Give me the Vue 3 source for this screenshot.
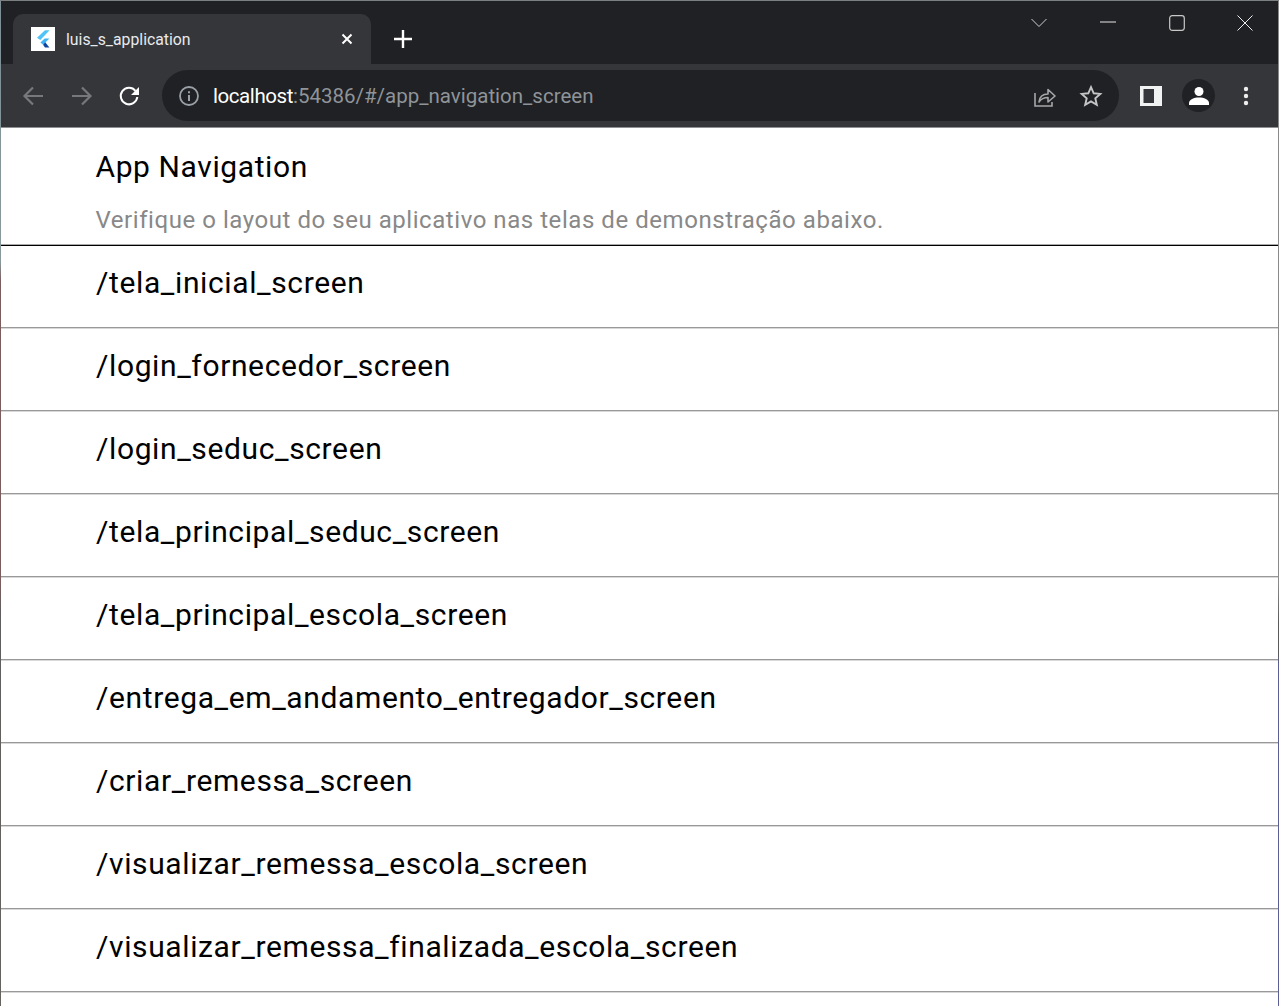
<script setup>
const routes = [
  '/tela_inicial_screen',
  '/login_fornecedor_screen',
  '/login_seduc_screen',
  '/tela_principal_seduc_screen',
  '/tela_principal_escola_screen',
  '/entrega_em_andamento_entregador_screen',
  '/criar_remessa_screen',
  '/visualizar_remessa_escola_screen',
  '/visualizar_remessa_finalizada_escola_screen',
]
</script>

<template>
  <div class="window">
    <div class="strip">
      <div class="tab">
        <span class="favicon">
          <svg width="24" height="24" viewBox="0 0 24 24">
            <path d="M14 3.200h4.600L9.300 13 6 10.800z" fill="#4fc3f7" />
            <path d="M18.400 11.600h-4.700l-4.300 4 2.700 2.200z" fill="#40b4f3" />
            <path d="M12.100 17.800l1.900 2.800h4.400l-4.200-5.400z" fill="#0d47a1" />
          </svg>
        </span>
        <span class="tab-title">luis_s_application</span>
        <svg class="tab-close" width="12" height="12" viewBox="0 0 12 12">
          <path d="M1.500 1.500l9 9M10.500 1.500l-9 9" stroke="#fff" stroke-width="2" />
        </svg>
      </div>
      <svg class="new-tab" width="18" height="18" viewBox="0 0 18 18">
        <path d="M9 0v18M0 9h18" stroke="#fff" stroke-width="2.400" />
      </svg>
      <div class="win-controls">
        <svg class="ctl" width="16" height="10" viewBox="0 0 16 10">
          <path d="M.5 1l7.500 7.500L15.500 1" fill="none" stroke="#cfd0d1" stroke-width="1" />
        </svg>
        <svg class="ctl" width="16" height="2" viewBox="0 0 16 2">
          <path d="M0 1h16" stroke="#e8e8e8" stroke-width="1" />
        </svg>
        <svg class="ctl" width="16" height="16" viewBox="0 0 16 16">
          <rect x=".7" y=".7" width="14.600" height="14.600" rx="2.500" fill="none" stroke="#c8c8c8" stroke-width="1.200" />
        </svg>
        <svg class="ctl" width="16" height="16" viewBox="0 0 16 16">
          <path d="M.5.5l15 15M15.500.5l-15 15" stroke="#eee" stroke-width="1" />
        </svg>
      </div>
    </div>

    <div class="toolbar">
      <svg class="nav" width="24" height="24" viewBox="0 0 24 24">
        <path d="M22 12H4.500M12 3.500 3.500 12l8.500 8.500" fill="none" stroke="#77787b" stroke-width="2.200" />
      </svg>
      <svg class="nav" width="24" height="24" viewBox="0 0 24 24">
        <path d="M3 12h17.500M13 3.500 21.500 12 13 20.500" fill="none" stroke="#77787b" stroke-width="2.200" />
      </svg>
      <svg class="nav" width="24" height="24" viewBox="0 0 24 24">
        <path d="M18.500 6.800A8.300 8.300 0 1 0 20.300 13" fill="none" stroke="#fff" stroke-width="2" />
        <path d="M22 3v8h-8z" fill="#fff" />
      </svg>
      <div class="omnibox">
        <svg class="info" width="20" height="20" viewBox="0 0 20 20">
          <circle cx="10" cy="10" r="9" fill="none" stroke="#9aa0a6" stroke-width="1.800" />
          <path d="M10 9v6M10 5.200v2" stroke="#9aa0a6" stroke-width="2" />
        </svg>
        <span class="url"><span class="host">localhost</span>:54386/#/app_navigation_screen</span>
        <span class="spacer"></span>
        <svg class="share" width="24" height="24" viewBox="0 0 24 24">
          <path d="M3 9v13h17v-4" fill="none" stroke="#a6a7a9" stroke-width="1.600" />
          <path d="M7 18c.5-5 4-8 9-8V5.500l7 6.500-7 6v-4.500c-4 0-7 1.500-9 4.500z" fill="none" stroke="#a6a7a9" stroke-width="1.600" stroke-linejoin="round" />
        </svg>
        <svg class="star" width="24" height="24" viewBox="0 0 24 24">
          <path d="M12 3.200l2.700 6.100 6.600.6-5 4.400 1.500 6.500L12 17.400l-5.800 3.400 1.500-6.500-5-4.400 6.600-.6z" fill="none" stroke="#c4c5c6" stroke-width="1.900" />
        </svg>
      </div>
      <svg class="panel" width="22" height="20" viewBox="0 0 22 20">
        <rect width="22" height="20" fill="#f1f2f2" />
        <rect x="3.500" y="3" width="10.500" height="14" fill="#35363a" />
      </svg>
      <span class="avatar">
        <svg width="20" height="20" viewBox="0 0 20 20">
          <circle cx="10" cy="5.500" r="4.500" fill="#fff" />
          <path d="M0 19v-2c0-3.500 5-5.500 10-5.500s10 2 10 5.500v2z" fill="#fff" />
        </svg>
      </span>
      <svg class="menu" width="6" height="20" viewBox="0 0 6 20">
        <circle cx="3" cy="3" r="2.200" fill="#eee" />
        <circle cx="3" cy="10" r="2.200" fill="#eee" />
        <circle cx="3" cy="17" r="2.200" fill="#eee" />
      </svg>
    </div>

    <main class="page">
      <header class="head">
        <h1>App Navigation</h1>
        <p>Verifique o layout do seu aplicativo nas telas de demonstração abaixo.</p>
      </header>
      <div v-for="r in routes" :key="r" class="row">{{ r }}</div>
    </main>
  </div>
</template>

<style>
html, body { margin: 0; background: #fff; }
</style>

<style scoped>
.window {
  height: 1006px;
  box-sizing: border-box;
  overflow: hidden;
  display: flex;
  flex-direction: column;
  padding: 1px 1px 0;
  background:
    linear-gradient(#7b7f80, #7b7f80) top / 100% 1px no-repeat,
    linear-gradient(#7e9096 0, #8a9a9c 26%, #7a5c5c 28%, #7a5c5c 58%, #5e5e5e 61%, #66625e 100%) left / 1px 100% no-repeat,
    linear-gradient(#8a8a8a 0, #8a8a8a 58%, #5a5a5a 62%, #5a5a5a 65%, #5c5f96 66%, #5c5f96 100%) right / 1px 100% no-repeat,
    #fff;
  font-family: Roboto, "Liberation Sans", sans-serif;
}
.strip {
  height: 63px;
  flex: none;
  background: #202124;
  display: flex;
  align-items: flex-end;
  padding-left: 12px;
}
.tab {
  position: relative;
  width: 358px;
  height: 50px;
  background: #35363a;
  border-radius: 10px 10px 0 0;
  display: flex;
  align-items: center;
  padding: 0 18px 0 18px;
  box-sizing: border-box;
}
.favicon {
  width: 24px;
  height: 24px;
  background: #fff;
  display: block;
  flex: none;
}
.favicon svg { display: block; }
.tab-title {
  margin-left: 11px;
  color: #e8eaed;
  font-size: 15.8px;
  flex: 1;
}
.new-tab { margin: 0 0 16px 23px; }
.win-controls {
  margin-left: auto;
  align-self: stretch;
  display: flex;
  align-items: flex-start;
}
.ctl { position: absolute; }
.ctl:nth-child(1) { top: 18px; right: 232px; }
.ctl:nth-child(2) { top: 21px; right: 163px; }
.ctl:nth-child(3) { top: 15px; right: 94px; }
.ctl:nth-child(4) { top: 15px; right: 26px; }
.toolbar {
  height: 64px;
  flex: none;
  background: #35363a;
  border-bottom: 1px solid #8f9092;
  display: flex;
  align-items: center;
  padding-left: 20px;
  box-sizing: border-box;
}
.nav { margin-right: 24px; flex: none; }
.nav:nth-child(3) { margin-right: 21px; }
.omnibox {
  width: 957px;
  height: 51px;
  flex: none;
  background: #202124;
  border-radius: 26px;
  display: flex;
  align-items: center;
  padding-left: 17px;
  padding-right: 16px;
  box-sizing: border-box;
}
.url {
  margin-left: 14px;
  color: #8f9499;
  font-size: 20.5px;
}
.host { color: #fff; letter-spacing: -.43px; }
.spacer { flex: 1; }
.share { margin-right: 23px; }
.panel { margin-left: 21px; flex: none; }
.avatar {
  margin-left: 20px;
  width: 33px;
  height: 33px;
  border-radius: 50%;
  background: #202124;
  display: flex;
  align-items: center;
  justify-content: center;
  flex: none;
}
.menu { margin-left: 28px; flex: none; }
.page {
  flex: 1;
  min-height: 0;
  background: #fff;
  color: #000;
}
.head {
  height: 117px;
  box-sizing: border-box;
  padding: 21px 0 0 94.500px;
  border-bottom: 1px solid #aaa;
  box-shadow: 0 1px 0 #000;
}
h1 {
  margin: 0;
  font-size: 30px;
  font-weight: 400;
  line-height: 36px;
  letter-spacing: .6px;
}
p {
  margin: 21px 0 0;
  font-size: 24px;
  line-height: 28px;
  letter-spacing: .55px;
  color: #888;
}
.row {
  height: 83px;
  box-sizing: border-box;
  padding: 20px 0 0 95px;
  border-bottom: 1px solid #999;
  box-shadow: 0 1px 0 #d8d8d8;
  font-size: 30px;
  line-height: 36px;
  letter-spacing: .62px;
}
</style>
